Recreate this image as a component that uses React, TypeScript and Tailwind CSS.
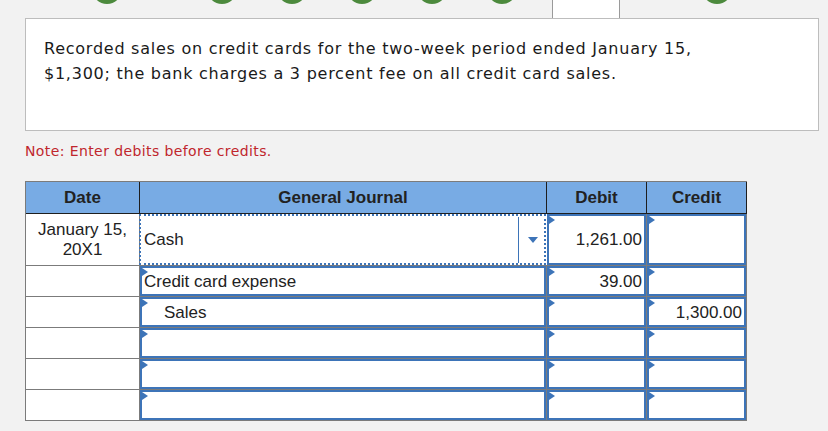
import React from "react";

type NavItem = { kind: "done"; ml: number } | { kind: "current"; ml: number };

const navItems: NavItem[] = [
  { kind: "done", ml: 72 },
  { kind: "done", ml: 45 },
  { kind: "done", ml: 0 },
  { kind: "done", ml: 0 },
  { kind: "done", ml: 0 },
  { kind: "done", ml: 0 },
  { kind: "current", ml: 15 },
  { kind: "done", ml: 62 },
];

type Row = {
  date?: string[];
  account?: string;
  indent?: boolean;
  debit?: string;
  credit?: string;
  select?: boolean;
};

const rows: Row[] = [
  { date: ["January 15,", "20X1"], account: "Cash", debit: "1,261.00", select: true },
  { account: "Credit card expense", debit: "39.00" },
  { account: "Sales", indent: true, credit: "1,300.00" },
  {},
  {},
  {},
];

function Marker() {
  return (
    <span className="absolute left-0 top-0 h-0 w-0 border-y-[4px] border-l-[6px] border-y-transparent border-l-[#3d74b8]" />
  );
}

function InputCell({
  width,
  value,
  align = "left",
  indent = false,
}: {
  width: string;
  value?: string;
  align?: "left" | "right";
  indent?: boolean;
}) {
  return (
    <div className={`${width} shrink-0 border-r border-b border-[#7b7b7b]`}>
      <div
        className={`relative flex h-full items-center border-2 border-[#3d74b8] pt-px ${
          align === "right" ? "justify-end pr-[2px]" : indent ? "pl-[22px]" : "pl-[2px]"
        }`}
      >
        <Marker />
        {value}
      </div>
    </div>
  );
}

export default function App() {
  return (
    <div className="min-h-[431px] w-[828px] overflow-hidden bg-[#f2f2f2] text-[#1c1c1c]">
      {/* question navigator */}
      <div className="flex h-[18px] overflow-hidden">
        {navItems.map((item, i) =>
          item.kind === "done" ? (
            <div
              key={i}
              className="flex w-[70px] shrink-0 justify-center"
              style={{ marginLeft: item.ml }}
            >
              <div className="-mt-[26px] h-[30px] w-[30px] rounded-full bg-[#4c8a3d]" />
            </div>
          ) : (
            <div
              key={i}
              className="h-[18px] w-[68px] shrink-0 border-x border-[#9a9a9a] bg-white"
              style={{ marginLeft: item.ml }}
            />
          )
        )}
      </div>

      {/* question text */}
      <div className="ml-[25px] h-[113px] w-[794px] border border-[#bdbdbd] bg-white pl-[18px] pt-[17px] font-['DejaVu_Sans',Verdana,sans-serif] text-[16px] leading-[25px] tracking-[0.75px] text-[#1a1a1a]">
        <p>Recorded sales on credit cards for the two-week period ended January 15,</p>
        <p>$1,300; the bank charges a 3 percent fee on all credit card sales.</p>
      </div>

      <p className="ml-[25px] mt-[10px] font-['DejaVu_Sans',Verdana,sans-serif] text-[14px] leading-[20px] tracking-[0.4px] text-[#c0262d]">
        Note: Enter debits before credits.
      </p>

      {/* journal table */}
      <div className="ml-[25px] mt-[20px] w-[722px] border-l border-t border-[#7b7b7b] font-['Liberation_Sans',Arial,sans-serif] text-[17px] text-[#222]">
        <div className="flex h-[32px] bg-[#78abe4] font-bold">
          <div className="flex w-[114px] items-center justify-center border-r border-b border-[#1e1e1e]">Date</div>
          <div className="flex w-[407px] items-center justify-center border-r border-b border-[#1e1e1e]">General Journal</div>
          <div className="flex w-[100px] items-center justify-center border-r border-b border-[#1e1e1e]">Debit</div>
          <div className="flex w-[100px] items-center justify-center border-r border-b border-[#1e1e1e]">Credit</div>
        </div>

        {rows.map((row, i) => (
          <div key={i} className={`flex bg-white ${i === 0 ? "h-[52px]" : "h-[31px]"}`}>
            <div className="flex w-[114px] shrink-0 flex-col items-center justify-center border-r border-b border-[#7b7b7b] leading-[20px]">
              {row.date?.map((d) => (
                <span key={d}>{d}</span>
              ))}
            </div>
            {row.select ? (
              <div className="w-[407px] shrink-0 border-b border-[#7b7b7b] pr-px">
                <div className="-ml-px flex h-full items-center border-2 border-dotted border-[#3d74b8] pl-[3px] pt-px">
                  <span className="flex-1">{row.account}</span>
                  <span className="h-[46px] w-px bg-[#3d74b8]" />
                  <span className="ml-[9px] mr-[6px] h-0 w-0 border-x-[5px] border-t-[6px] border-x-transparent border-t-[#3d74b8]" />
                </div>
              </div>
            ) : (
              <InputCell width="w-[407px]" value={row.account} indent={row.indent} />
            )}
            <InputCell width="w-[100px]" value={row.debit} align="right" />
            <InputCell width="w-[100px]" value={row.credit} align="right" />
          </div>
        ))}
      </div>
    </div>
  );
}
